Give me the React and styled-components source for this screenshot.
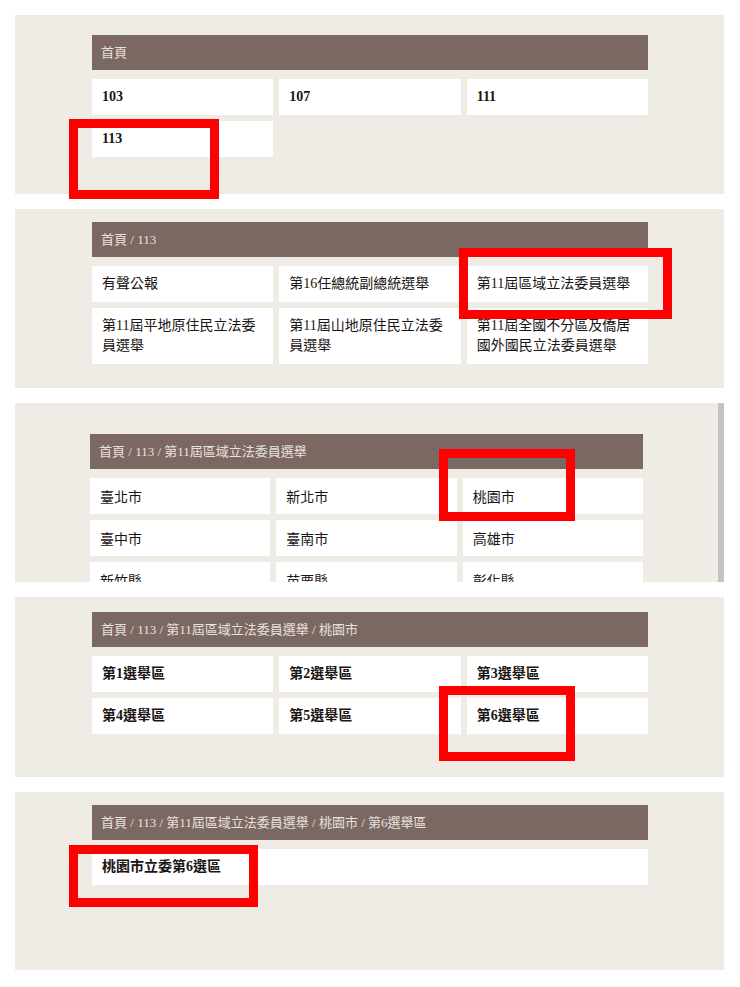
import styled, { createGlobalStyle } from "styled-components";

const GlobalStyle = createGlobalStyle`
  * { box-sizing: border-box; }
  html, body { margin: 0; padding: 0; background: #ffffff; }
  body { font-family: "Liberation Serif", "Noto Sans CJK TC", serif; }
`;

const Page = styled.div`
  display: flex;
  flex-direction: column;
  gap: 15px;
  padding: 15px 16px 0 15px;
  width: 740px;
`;

const Panel = styled.section`
  position: relative;
  height: ${(p) => p.$h || 179}px;
  background: #efece6;
  padding: ${(p) => p.$top}px ${(p) => p.$right || 76}px 0 ${(p) => p.$left || 77}px;
  overflow: ${(p) => (p.$clip ? "hidden" : "visible")};
  border-right: ${(p) => (p.$scroll ? "6px solid #c3c3c3" : "none")};
`;

const Crumbs = styled.div`
  height: 35px;
  background: #7b6863;
  color: #e9e1dd;
  font-size: 13px;
  line-height: 35px;
  padding-left: 9px;
  white-space: nowrap;
`;

const Grid = styled.div`
  display: grid;
  grid-template-columns: ${(p) => (p.$single ? "1fr" : "repeat(3, 1fr)")};
  gap: 6px;
  margin-top: 9px;
`;

const Cell = styled.div`
  background: #ffffff;
  padding: 8px 10px;
  min-height: 36px;
  font-size: 14px;
  line-height: 20px;
  color: #1a1414;
  font-weight: ${(p) => (p.$bold ? 700 : 400)};
  font-family: ${(p) =>
    p.$sans
      ? '"Noto Sans CJK TC", "Noto Sans", sans-serif'
      : '"Liberation Serif", "Noto Sans CJK TC", serif'};
`;

const Marker = styled.div`
  position: absolute;
  left: ${(p) => p.$x}px;
  top: ${(p) => p.$y}px;
  width: ${(p) => p.$w}px;
  height: ${(p) => p.$hh}px;
  border: 9px solid #ff0000;
  pointer-events: none;
`;

const ROOT = "首頁";

export default function App() {
  return (
    <>
      <GlobalStyle />
      <Page>
        <Panel $top={20}>
          <Crumbs>{ROOT}</Crumbs>
          <Grid>
            {["103", "107", "111", "113"].map((t) => (
              <Cell key={t} $bold>{t}</Cell>
            ))}
          </Grid>
          <Marker $x={54} $y={104} $w={150} $hh={80} />
        </Panel>

        <Panel $top={13}>
          <Crumbs>{ROOT} / 113</Crumbs>
          <Grid>
            {[
              "有聲公報",
              "第16任總統副總統選舉",
              "第11屆區域立法委員選舉",
              "第11屆平地原住民立法委員選舉",
              "第11屆山地原住民立法委員選舉",
              "第11屆全國不分區及僑居國外國民立法委員選舉",
            ].map((t) => (
              <Cell key={t}>{t}</Cell>
            ))}
          </Grid>
          <Marker $x={444} $y={39} $w={213} $hh={71} />
        </Panel>

        <Panel $top={31} $left={75} $right={75} $clip $scroll>
          <Crumbs>{ROOT} / 113 / 第11屆區域立法委員選舉</Crumbs>
          <Grid>
            {["臺北市", "新北市", "桃園市", "臺中市", "臺南市", "高雄市", "新竹縣", "苗栗縣", "彰化縣"].map(
              (t) => (
                <Cell key={t} $sans>{t}</Cell>
              )
            )}
          </Grid>
          <Marker $x={424} $y={46} $w={136} $hh={72} />
        </Panel>

        <Panel $top={15} $h={180}>
          <Crumbs>{ROOT} / 113 / 第11屆區域立法委員選舉 / 桃園市</Crumbs>
          <Grid>
            {[1, 2, 3, 4, 5, 6].map((n) => (
              <Cell key={n} $bold>第{n}選舉區</Cell>
            ))}
          </Grid>
          <Marker $x={424} $y={89} $w={136} $hh={75} />
        </Panel>

        <Panel $top={13} $h={178}>
          <Crumbs>{ROOT} / 113 / 第11屆區域立法委員選舉 / 桃園市 / 第6選舉區</Crumbs>
          <Grid $single>
            <Cell $bold>桃園市立委第6選區</Cell>
          </Grid>
          <Marker $x={54} $y={53} $w={189} $hh={62} />
        </Panel>
      </Page>
    </>
  );
}
